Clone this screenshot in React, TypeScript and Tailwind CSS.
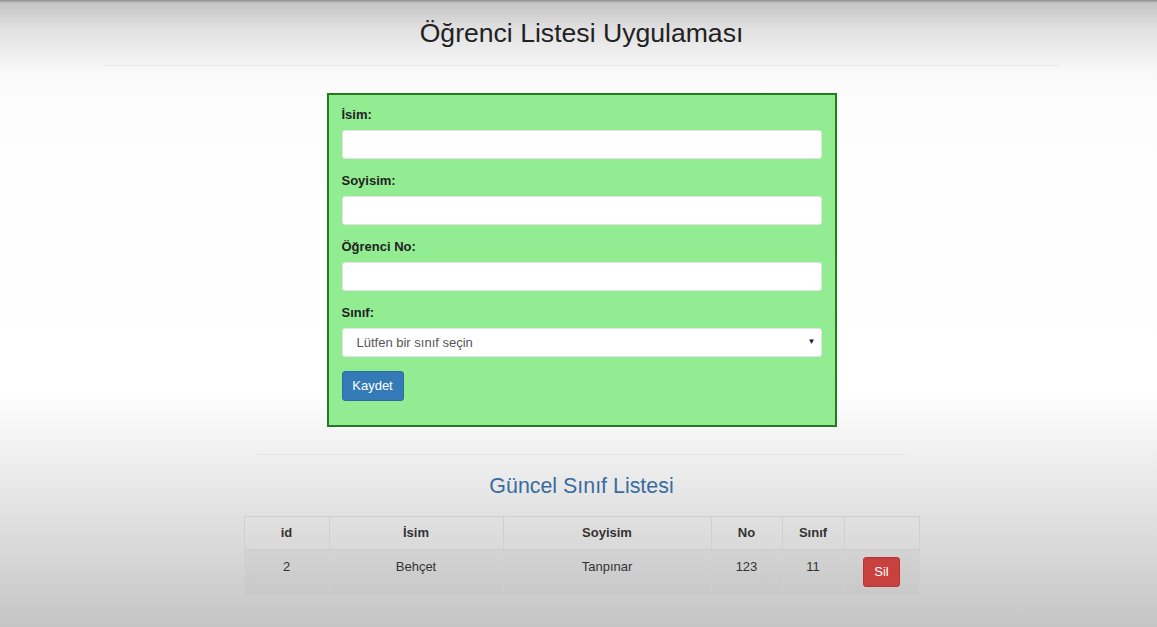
import React, { useState } from 'react';

type Student = { id: number; isim: string; soyisim: string; no: string; sinif: string };

const App = () => {
    const [students, setStudents] = useState<Student[]>([
        { id: 2, isim: 'Behçet', soyisim: 'Tanpınar', no: '123', sinif: '11' },
    ]);
    const [form, setForm] = useState({ isim: '', soyisim: '', no: '', sinif: '' });

    const handleChange = (e: React.ChangeEvent<HTMLInputElement | HTMLSelectElement>) => {
        const { name, value } = e.target;
        setForm(prev => ({ ...prev, [name]: value }));
    };

    const handleSubmit = (e: React.FormEvent) => {
        e.preventDefault();
    };

    const inputCls =
        'block w-full h-[29px] rounded-[3px] border border-[#e3e3e3] bg-white px-3 text-[13px] text-[#555] outline-none';
    const labelCls = 'block h-[18px] mb-[6px] text-[13px] leading-[18px] font-bold text-[#222]';

    return (
        <div className="min-h-[627px] pl-[6px] font-['Liberation_Sans',Arial,sans-serif] bg-[linear-gradient(to_bottom,#8c8c8c_0px,#c4c4c4_3px,#e2e2e2_30px,#f8f8f8_70px,#fdfdfd_100px,#ffffff_390px,#ececec_470px,#d6d6d6_560px,#c5c5c5_627px)]">
            <div className="pt-[16px] text-center">
                <h1 className="text-[26.6px] leading-[34px] text-[#222]">Öğrenci Listesi Uygulaması</h1>
            </div>
            <div className="mx-auto mt-[15px] w-[955px] border-t border-[#e8e8e8]" />

            <form
                onSubmit={handleSubmit}
                className="mx-auto mt-[27px] w-[510px] h-[334px] border-2 border-[#237a23] bg-[#92ec92] px-[13px] pt-[11px]"
            >
                <label className={labelCls}>İsim:</label>
                <input name="isim" value={form.isim} onChange={handleChange} className={inputCls} />
                <label className={`${labelCls} mt-[13px]`}>Soyisim:</label>
                <input name="soyisim" value={form.soyisim} onChange={handleChange} className={inputCls} />
                <label className={`${labelCls} mt-[13px]`}>Öğrenci No:</label>
                <input name="no" value={form.no} onChange={handleChange} className={inputCls} />
                <label className={`${labelCls} mt-[13px]`}>Sınıf:</label>
                <div className="relative">
                    <select
                        name="sinif"
                        value={form.sinif}
                        onChange={handleChange}
                        className={`${inputCls} appearance-none pl-[14px]`}
                    >
                        <option value="">Lütfen bir sınıf seçin</option>
                        <option value="9">9</option>
                        <option value="10">10</option>
                        <option value="11">11</option>
                        <option value="12">12</option>
                    </select>
                    <span className="pointer-events-none absolute right-[6px] top-[8px] text-[8px] text-[#222]">▼</span>
                </div>
                <button
                    type="submit"
                    className="mt-[14px] h-[30px] w-[62px] rounded-[3px] border border-[#2e6da4] bg-[#337ab7] text-[13px] text-white"
                >
                    Kaydet
                </button>
            </form>

            <div className="mx-auto mt-[27px] w-[650px] border-t border-[#e6e6e6]" />
            <h3 className="mt-[17px] text-center text-[21.4px] leading-[28px] text-[#3a6d9d]">Güncel Sınıf Listesi</h3>

            <table className="mx-auto mt-[16px] w-[676px] border-collapse text-[13px] text-[#333]">
                <thead>
                    <tr className="h-[33px]">
                        <th className="w-[85px] border border-b-2 border-[#cfcfcf] font-bold">id</th>
                        <th className="w-[174px] border border-b-2 border-[#cfcfcf] font-bold">İsim</th>
                        <th className="w-[208px] border border-b-2 border-[#cfcfcf] font-bold">Soyisim</th>
                        <th className="w-[71px] border border-b-2 border-[#cfcfcf] font-bold">No</th>
                        <th className="w-[62px] border border-b-2 border-[#cfcfcf] font-bold">Sınıf</th>
                        <th className="border border-b-2 border-[#cfcfcf]" />
                    </tr>
                </thead>
                <tbody>
                    {students.map(s => (
                        <tr key={s.id} className="h-[46px] bg-[#00000005]">
                            <td className="border border-[#cfcfcf] pt-[6px] text-center align-top">{s.id}</td>
                            <td className="border border-[#cfcfcf] pt-[6px] text-center align-top">{s.isim}</td>
                            <td className="border border-[#cfcfcf] pt-[6px] text-center align-top">{s.soyisim}</td>
                            <td className="border border-[#cfcfcf] pt-[6px] text-center align-top">{s.no}</td>
                            <td className="border border-[#cfcfcf] pt-[6px] text-center align-top">{s.sinif}</td>
                            <td className="border border-[#cfcfcf] pt-[6px] text-center align-top">
                                <button
                                    onClick={() => setStudents(prev => prev.filter(x => x.id !== s.id))}
                                    className="h-[30px] w-[37px] rounded-[3px] border border-[#b93531] bg-[#c9413e] text-[13px] text-white"
                                >
                                    Sil
                                </button>
                            </td>
                        </tr>
                    ))}
                </tbody>
            </table>
        </div>
    );
};

export default App;
